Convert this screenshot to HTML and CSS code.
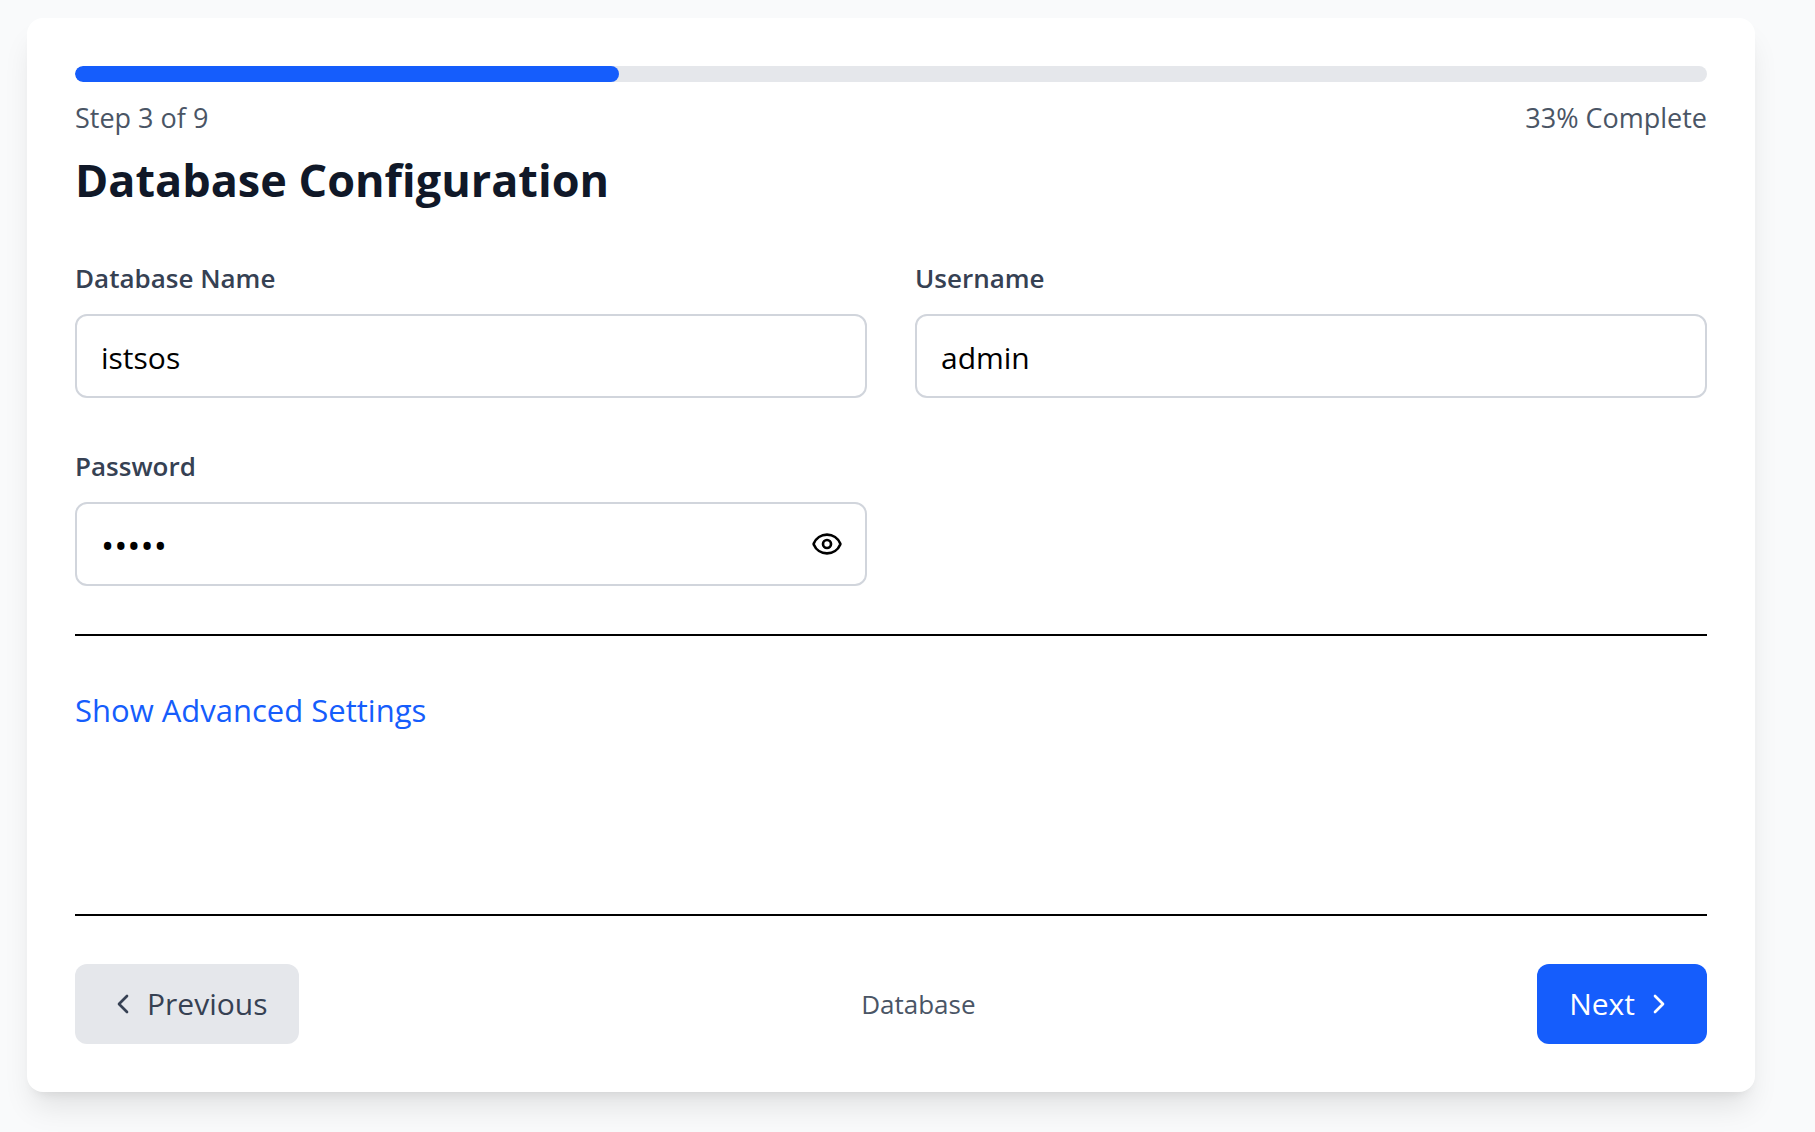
FILE: index.html
```html
<!DOCTYPE html>
<html lang="en">
<head>
<meta charset="utf-8">
<meta name="viewport" content="width=device-width, initial-scale=1">
<title>Database Configuration</title>
<link rel="stylesheet" href="styles.css">
</head>
<body>
<main class="card">
  <header>
    <div class="progress" role="progressbar" aria-label="Setup progress" aria-valuenow="33" aria-valuemin="0" aria-valuemax="100">
      <div class="progress-fill" style="width: 33.33%"></div>
    </div>
    <div class="progress-info">
      <span>Step 3 of 9</span>
      <span>33% Complete</span>
    </div>
    <h1 class="title">Database Configuration</h1>
  </header>
  <form class="fields">
    <div class="field">
      <label class="label" for="db-name">Database Name</label>
      <input class="input" id="db-name" type="text" value="istsos">
    </div>
    <div class="field">
      <label class="label" for="username">Username</label>
      <input class="input" id="username" type="text" value="admin" autocomplete="off">
    </div>
    <div class="field">
      <label class="label" for="password">Password</label>
      <div class="password-box">
        <input class="input" id="password" type="password" value="admin" autocomplete="off">
        <button class="reveal" type="button" aria-label="Show password">
          <svg class="icon" viewBox="0 0 24 24"><path d="M2.062 12.348a1 1 0 0 1 0-.696 10.75 10.75 0 0 1 19.876 0 1 1 0 0 1 0 .696 10.75 10.75 0 0 1-19.876 0"/><circle cx="12" cy="12" r="3"/></svg>
        </button>
      </div>
    </div>
  </form>
  <section class="advanced">
    <button class="advanced-toggle" type="button">Show Advanced Settings</button>
  </section>
  <footer class="footer">
    <button class="btn btn-secondary" type="button">
      <svg class="icon" viewBox="0 0 24 24"><path d="m15 18-6-6 6-6"/></svg>
      Previous
    </button>
    <span class="step-name">Database</span>
    <button class="btn btn-primary" type="button">
      Next
      <svg class="icon" viewBox="0 0 24 24"><path d="m9 18 6-6-6-6"/></svg>
    </button>
  </footer>
</main>
</body>
</html>
```
FILE: styles.css
```css
*, *::before, *::after {
  box-sizing: border-box;
}

body {
  display: flex;
  min-height: 100vh;
  margin: 0;
  padding: 18px 60px 40px 27px;
  background: #f9fafb;
  color: #000;
  font-family: "Segoe UI", "Open Sans", "Noto Sans", sans-serif;
  font-size: 30px;
  line-height: 48px;
}

button, input {
  font: inherit;
  color: inherit;
}

button {
  border: 0;
  padding: 0;
  background: none;
  cursor: pointer;
}

.card {
  flex: 1;
  display: flex;
  flex-direction: column;
  padding: 48px;
  border-radius: 16px;
  background: #fff;
  box-shadow: 0 20px 30px -6px rgb(0 0 0 / 10%), 0 8px 12px -8px rgb(0 0 0 / 10%);
}

.progress {
  height: 16px;
  border-radius: 8px;
  background: #e5e7eb;
  overflow: hidden;
}

.progress-fill {
  height: 100%;
  border-radius: 8px;
  background: #155dfc;
}

.progress-info {
  display: flex;
  justify-content: space-between;
  margin-top: 16px;
  color: #4a5565;
  font-size: 27px;
  line-height: 40px;
}

.title {
  margin: 8px 0 44px;
  color: #101828;
  font-size: 45px;
  font-weight: 700;
  line-height: 68px;
}

.fields {
  display: grid;
  grid-template-columns: 1fr 1fr;
  gap: 48px;
}

.field {
  display: flex;
  flex-direction: column;
  gap: 16px;
}

.label {
  color: #364153;
  font-size: 26px;
  font-weight: 600;
  line-height: 40px;
}

.input {
  width: 100%;
  height: 84px;
  padding: 2px 24px 0;
  border: 2px solid #d1d5dc;
  border-radius: 12px;
  background: #fff;
}

.password-box {
  position: relative;
}

.password-box .input {
  padding-right: 80px;
  font-size: 35px;
}

.reveal {
  position: absolute;
  inset: 0 24px 0 auto;
  display: flex;
  align-items: center;
}

.icon {
  width: 32px;
  height: 32px;
  fill: none;
  stroke: currentColor;
  stroke-width: 2;
  stroke-linecap: round;
  stroke-linejoin: round;
}

.advanced {
  margin-top: 48px;
  padding: 48px 0;
  border-top: 2px solid #000;
}

.advanced-toggle {
  color: #155dfc;
  font-size: 31px;
  font-weight: 500;
  line-height: 52px;
}

.footer {
  display: flex;
  align-items: center;
  justify-content: space-between;
  margin-top: auto;
  padding-top: 48px;
  border-top: 2px solid #000;
}

.step-name {
  color: #4a5565;
  font-size: 26px;
  line-height: 40px;
}

.btn {
  display: flex;
  align-items: center;
  gap: 8px;
  height: 80px;
  padding: 0 32px;
  border-radius: 12px;
}

.btn-secondary {
  background: #e5e7eb;
  color: #364153;
}

.btn-primary {
  background: #155dfc;
  color: #fff;
}
```
